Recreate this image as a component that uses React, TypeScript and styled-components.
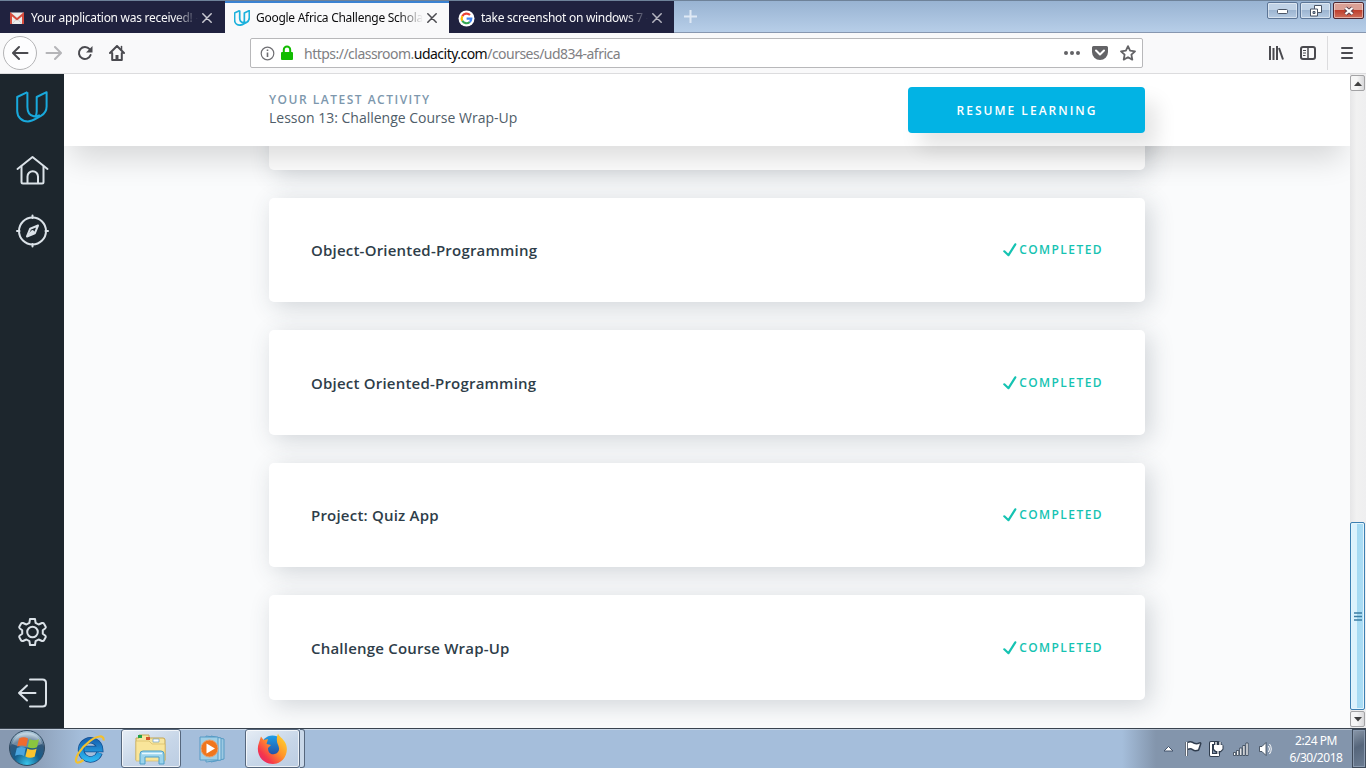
import React from "react";
import styled, { createGlobalStyle, css } from "styled-components";

const GlobalStyle = createGlobalStyle`
  * { box-sizing: border-box; }
  html, body { margin: 0; padding: 0; overflow: hidden; }
  body { font-family: "Open Sans", "Noto Sans", sans-serif; }
  svg { display: block; flex: none; }
`;

const Screen = styled.div`
  width: 1366px;
  height: 768px;
  display: flex;
  flex-direction: column;
  overflow: hidden;
  background: #fafbfc;
`;

/* ---------- tab strip ---------- */
const TabStrip = styled.div`
  height: 33px;
  flex: none;
  display: flex;
  align-items: stretch;
  background: linear-gradient(#98b3d2, #b7cee8);
  border-top: 1px solid #6e8299;
  border-bottom: 1px solid #8797b0;
`;

const Tab = styled.div<{ $active?: boolean; $width: number; $end?: number }>`
  width: ${(p) => p.$width}px;
  height: 32px;
  flex: none;
  display: flex;
  align-items: center;
  padding: 2px ${(p) => p.$end ?? 12}px 0 9px;
  color: ${(p) => (p.$active ? "#0c0c0d" : "#f9f9fa")};
  background: ${(p) => (p.$active ? "#f9f9fa" : "#20223f")};
  ${(p) =>
    p.$active &&
    css`
      box-shadow: inset 0 2px 0 #3a82d2;
    `}
`;

const TabTitle = styled.span<{ $spacing: number }>`
  flex: 1;
  min-width: 0;
  margin: 0 4px 0 6px;
  overflow: hidden;
  white-space: pre;
  font: 12px/18px "Noto Sans", sans-serif;
  letter-spacing: ${(p) => p.$spacing}px;
  mask-image: linear-gradient(to right, #000 calc(100% - 24px), transparent);
`;

const StripSpace = styled.div`
  flex: 1;
  padding: 8px 0 0 9px;
`;

const WindowButtons = styled.div`
  display: flex;
  gap: 2px;
  padding: 1px 2px 0 0;
`;

const WindowButton = styled.div<{ $close?: boolean }>`
  width: 31px;
  height: 17px;
  display: flex;
  align-items: center;
  justify-content: center;
  border: 1px solid ${(p) => (p.$close ? "#4f2731" : "#5c7596")};
  border-radius: 2px;
  box-shadow: inset 0 0 0 1px rgba(255, 255, 255, 0.45);
  background: ${(p) =>
    p.$close
      ? "linear-gradient(#dba095 0 45%, #bf3f2d 50%, #cf6f5b)"
      : "linear-gradient(#c0d2e6 0 45%, #9db5d1 50%, #b5cae2)"};
`;

/* ---------- toolbar ---------- */
const Toolbar = styled.div`
  height: 41px;
  flex: none;
  display: flex;
  align-items: center;
  background: #f9f9fa;
  border-bottom: 1px solid #dcdcde;
`;

const NavButtons = styled.div`
  width: 250px;
  display: flex;
  align-items: center;
  padding-left: 3px;
`;

const BackButton = styled.div`
  width: 34px;
  height: 34px;
  margin-right: 8px;
  display: flex;
  align-items: center;
  justify-content: center;
  border: 1px solid #b4b4b6;
  border-radius: 50%;
  background: #fdfdfe;
`;

const NavIcon = styled.div`
  width: 16px;
  margin-right: 16px;
`;

const AddressBar = styled.div`
  width: 893px;
  height: 30px;
  display: flex;
  align-items: center;
  padding: 0 6px 0 9px;
  border: 1px solid #b8b8ba;
  border-radius: 2px;
  background: #fff;
`;

const LockSlot = styled.div`
  margin-left: 5px;
`;

const Url = styled.span`
  flex: 1;
  margin-left: 10px;
  padding-top: 2px;
  color: #808083;
  font: 14px/20px "Noto Sans", sans-serif;
  letter-spacing: -0.52px;
  b {
    font-weight: 400;
    color: #0c0c0d;
  }
`;

const AddressActions = styled.div`
  display: flex;
  align-items: center;
  gap: 12px;
`;

const ToolbarEnd = styled.div`
  flex: 1;
  height: 100%;
  display: flex;
  align-items: center;
  justify-content: flex-end;
`;

const MenuButton = styled.div`
  height: 34px;
  width: 39px;
  margin-left: 11px;
  padding-left: 11px;
  display: flex;
  align-items: center;
  border-left: 1px solid #dcdcde;
`;

/* ---------- page ---------- */
const Viewport = styled.div`
  height: 654px;
  flex: none;
  display: flex;
`;

const Sidebar = styled.nav`
  width: 64px;
  flex: none;
  display: flex;
  flex-direction: column;
  align-items: center;
  padding: 17px 0 18px;
  background: #1d262d;
`;

const SidebarGap = styled.div<{ $size?: number }>`
  ${(p) => (p.$size ? `height: ${p.$size}px;` : "flex: 1;")}
`;

const Page = styled.main`
  width: 1286px;
  flex: none;
  display: flex;
  flex-direction: column;
  overflow: hidden;
  background: #fafbfc;
`;

const ActivityHeader = styled.header`
  height: 72px;
  flex: none;
  display: flex;
  align-items: flex-start;
  justify-content: space-between;
  padding: 13px 205px 0;
  background: #fff;
  box-shadow: 0 20px 30px -7px rgba(0, 0, 0, 0.14);
  z-index: 1;
`;

const ActivityLabel = styled.div`
  margin-top: 4px;
  font-size: 12px;
  font-weight: 600;
  line-height: 18px;
  letter-spacing: 1.5px;
  color: #7d97ad;
`;

const ActivityName = styled.div`
  margin-top: -1px;
  font-size: 14px;
  line-height: 20px;
  letter-spacing: 0;
  color: #4f5d69;
`;

const ResumeButton = styled.div`
  width: 237px;
  height: 46px;
  display: flex;
  align-items: center;
  justify-content: center;
  border-radius: 4px;
  background: #02b3e4;
  box-shadow: 12px 15px 20px 0 rgba(0, 0, 0, 0.1);
  color: #fff;
  font-size: 12px;
  font-weight: 600;
  letter-spacing: 2.02px;
  padding: 1px 0 0 1px;
`;

const LessonList = styled.div`
  display: flex;
  flex-direction: column;
  gap: 28px;
  width: 876px;
  margin: -80.75px 0 0 205px;
`;

const LessonCard = styled.div`
  height: 104.5px;
  flex: none;
  display: flex;
  align-items: center;
  justify-content: space-between;
  padding: 0 42px;
  border-radius: 5px;
  background: #fff;
  box-shadow: 5px 5px 25px 0 rgba(46, 61, 73, 0.2);
`;

const LessonTitle = styled.span`
  font-size: 15px;
  font-weight: 600;
  line-height: 22px;
  letter-spacing: 0.21px;
  color: #2e3d49;
`;

const Status = styled.span`
  display: flex;
  align-items: center;
  gap: 2px;
  color: #15c3b2;
  font-size: 12px;
  font-weight: 600;
  line-height: 20px;
  letter-spacing: 1.43px;
`;

const Scrollbar = styled.div`
  width: 16px;
  display: flex;
  flex-direction: column;
  align-items: flex-start;
  padding: 1px 0 1px;
  background: linear-gradient(90deg, #e6e6e7, #f1f1f1 40%, #efeff0);
`;

const ScrollArrow = styled.div`
  width: 15px;
  height: 16px;
  display: flex;
  align-items: center;
  justify-content: center;
  border: 1px solid #a3a3a5;
  border-radius: 2px;
  background: linear-gradient(90deg, #f6f6f6 45%, #d8d8da);
`;

const ScrollThumb = styled.div`
  width: 15px;
  height: 188px;
  margin-top: auto;
  margin-bottom: 1px;
  display: flex;
  align-items: center;
  justify-content: center;
  border: 1px solid #3c7fb1;
  border-radius: 2px;
  box-shadow: inset 0 0 0 1px #e3f5fd;
  background: linear-gradient(90deg, #dcf2fc 45%, #a6daf2 50%, #abddf5);
`;

/* ---------- taskbar ---------- */
const Taskbar = styled.footer`
  height: 40px;
  flex: none;
  display: flex;
  border-top: 1px solid #39434f;
  box-shadow: inset 0 1px 0 rgba(255, 255, 255, 0.4);
  background: linear-gradient(
    90deg,
    #8799b1 0,
    #8799b1 24px,
    #a5bedb 82px,
    #a5bedb 1122px,
    #8395ac 1156px
  );
`;

const StartCell = styled.div`
  width: 60px;
  padding: 0 0 0 8px;
`;

const TaskItem = styled.div<{ $width?: number; $running?: boolean }>`
  width: ${(p) => p.$width ?? 60}px;
  height: 39px;
  flex: none;
  display: flex;
  align-items: center;
  justify-content: center;
  ${(p) =>
    p.$running &&
    css`
      border: 1px solid #56677d;
      border-radius: 3px;
      box-shadow: inset 0 0 0 1px rgba(255, 255, 255, 0.7);
      background: linear-gradient(150deg, #e6edf5, #c7d6e8 55%, #bccde2);
    `}
`;

const StackedEdge = styled.div`
  width: 5px;
  height: 39px;
  border: 1px solid #56677d;
  border-left: 0;
  border-radius: 0 3px 3px 0;
  background: #c9d8e9;
`;

const Tray = styled.div`
  margin-left: auto;
  display: flex;
  align-items: center;
`;

const Clock = styled.div`
  width: 72px;
  text-align: center;
  color: #fff;
  font: 12px/17px "Noto Sans", sans-serif;
  letter-spacing: -0.45px;
`;

const ShowDesktop = styled.div`
  width: 14px;
  height: 39px;
  border: 1px solid #3f4b5b;
  box-shadow: inset 0 0 0 1px #8b9bb0;
  background: linear-gradient(155deg, #8b98a9, #56667b 45%, #6b7c92);
`;

/* ---------- icons ---------- */
const CloseIcon = ({ color }: { color: string }) => (
  <svg width="10" height="10" viewBox="0 0 10 10" stroke={color} strokeWidth="1.5" strokeLinecap="round">
    <path d="M.8.8 9.2 9.2M9.2.8.8 9.2" />
  </svg>
);

const GmailIcon = () => (
  <svg width="16" height="16" viewBox="0 0 16 16">
    <rect x="1" y="2.5" width="14" height="11.5" rx="1" fill="#ececec" />
    <path d="M3.5 13.5 8 8.5l4.5 5" fill="none" stroke="#cfcfcf" />
    <path d="M2 14V4.2l6 5 6-5V14" fill="none" stroke="#d54b3d" strokeWidth="2" />
  </svg>
);

const GoogleIcon = () => (
  <svg width="17" height="17" viewBox="0 0 17 17">
    <circle cx="8.5" cy="8.5" r="8" fill="#fff" />
    <g fill="none" strokeWidth="2.2">
      <path d="M12 5.1A4.8 4.8 0 0 0 4.3 6.2" stroke="#ea4335" />
      <path d="M4.3 6.2a4.8 4.8 0 0 0 0 4.6" stroke="#fbbc05" />
      <path d="M4.3 10.8A4.8 4.8 0 0 0 11.7 12" stroke="#34a853" />
      <path d="M11.7 12a4.6 4.6 0 0 0 1.6-3.4H8.6" stroke="#4285f4" />
    </g>
  </svg>
);

const UdacityMark = ({ size, stroke, color }: { size: number; stroke: number; color: string }) => (
  <svg width={size} height={size} viewBox="0 0 32 32" fill="none" stroke={color} strokeWidth={stroke} strokeLinejoin="round">
    <path d="M11.4 1.2V16c0 5 2 8.400 6.300 9.200 2.500.5 4.500-.1 6.200-1.100" />
    <path d="M11.400 1.200 1.200 6v14c0 6 4.500 10.400 10.700 10.400 3 0 5.300-1 9-3.200l4-2.300c3.700-2.200 5.700-5 5.700-9.500V1.200L20.700 6v14.400c0 2.500-.2 3.600-1.500 5.600" />
  </svg>
);

const ArrowIcon = ({ color, flip }: { color: string; flip?: boolean }) => (
  <svg width="17" height="16" viewBox="0 0 17 16" fill="none" stroke={color} strokeWidth="2" strokeLinecap="round" strokeLinejoin="round">
    <path d={flip ? "M1.500 8h14M10 2l6 6-6 6" : "M15.500 8h-14M7 2 1 8l6 6"} />
  </svg>
);

const ReloadIcon = () => (
  <svg width="16" height="16" viewBox="0 0 16 16">
    <path d="M12.600 4.200A6 6 0 1 0 13.600 10" fill="none" stroke="#4a4a4f" strokeWidth="2" strokeLinecap="round" />
    <path d="M15.500 1v6.500H9Z" fill="#4a4a4f" />
  </svg>
);

const BrowserHomeIcon = () => (
  <svg width="16" height="16" viewBox="0 0 16 16" fill="none" stroke="#4a4a4f" strokeWidth="2" strokeLinecap="round" strokeLinejoin="round">
    <path d="m1 8 7-7 7 7M3.200 8v7h9.600V8" />
    <path d="M8 10v4" strokeWidth="3" strokeLinecap="butt" />
    <path d="M12.500 1.500v3" strokeWidth="1.500" />
  </svg>
);

const InfoIcon = () => (
  <svg width="15" height="15" viewBox="0 0 15 15" fill="none" stroke="#6f6f73">
    <circle cx="7.500" cy="7.500" r="6.300" strokeWidth="1.200" />
    <path d="M7.500 6.500V11M7.500 3.500v1.600" strokeWidth="1.600" />
  </svg>
);

const LockIcon = () => (
  <svg width="14" height="16" viewBox="0 0 14 16">
    <path d="M3.800 8V4.800a3.200 3.200 0 0 1 6.400 0V8" fill="none" stroke="#12bc00" strokeWidth="2" />
    <rect x="1" y="7" width="12" height="8" rx="1" fill="#12bc00" />
  </svg>
);

const DotsIcon = () => (
  <svg width="16" height="16" viewBox="0 0 16 16" fill="#636366">
    <circle cx="2" cy="8" r="2" />
    <circle cx="8" cy="8" r="2" />
    <circle cx="14" cy="8" r="2" />
  </svg>
);

const PocketIcon = () => (
  <svg width="16" height="16" viewBox="0 0 16 16">
    <path d="M1.500 1h13A1.500 1.500 0 0 1 16 2.500V7A8 8 0 0 1 0 7V2.500A1.500 1.500 0 0 1 1.500 1Z" fill="#636366" />
    <path d="m4 5.500 4 4 4-4" fill="none" stroke="#fff" strokeWidth="2" strokeLinecap="round" strokeLinejoin="round" />
  </svg>
);

const StarIcon = () => (
  <svg width="16" height="16" viewBox="0 0 16 16" fill="none" stroke="#636366" strokeWidth="1.800" strokeLinejoin="round">
    <path d="m8 1.100 2.100 4.500 4.900.7-3.600 3.400.9 4.900L8 12.200l-4.300 2.400.9-4.900L1 6.300l4.900-.7Z" />
  </svg>
);

const LibraryIcon = () => (
  <svg width="16" height="16" viewBox="0 0 16 16" fill="none" stroke="#4a4a4f" strokeWidth="2" strokeLinecap="butt">
    <path d="M2 1v14M5.500 3v12M9 1v14M11 3l4 11.500" />
  </svg>
);

const SidebarIcon = () => (
  <svg width="16" height="16" viewBox="0 0 16 16" fill="none" stroke="#4a4a4f">
    <rect x="1" y="2" width="14" height="12" rx="2" strokeWidth="2" />
    <path d="M8 2v12" strokeWidth="1.500" />
    <path d="M3 5.500h3M3 8h3M3 10.500h2.500" />
  </svg>
);

const MenuIcon = () => (
  <svg width="16" height="16" viewBox="0 0 16 16" stroke="#4a4a4f" strokeWidth="2" strokeLinecap="round">
    <path d="M3 3h10M3 8h10M3 13h10" />
  </svg>
);

const iconProps = {
  width: 34,
  height: 34,
  viewBox: "0 0 34 34",
  fill: "none",
  stroke: "#dbe2e8",
  strokeWidth: 2,
  strokeLinejoin: "round" as const,
  strokeLinecap: "round" as const,
};

const HomeIcon = () => (
  <svg {...iconProps} viewBox="0 .5 34 34">
    <path d="m2.500 16.500 15-12 15 12" />
    <path d="M6.500 14v15.500q0 1.500 1.500 1.500h19q1.500 0 1.500-1.500V14M12.500 31v-7a5 5 0 0 1 10.500 0v7" />
  </svg>
);

const CompassIcon = () => (
  <svg {...iconProps} viewBox="-.5 0 34 34">
    <circle cx="17" cy="17" r="13.500" />
    <path d="M17 1.500v2.500M17 30v2.500M1.500 17h2.500M30 17h2.500" />
    <path d="m22.500 11.500-7.800 3.200-3.200 7.800 7.800-3.200Z" />
    <path d="m17 17-4 4 5.500-2.500Z" fill="#dbe2e8" />
  </svg>
);

const GearIcon = () => (
  <svg {...iconProps} viewBox="-.5 0 34 34">
    <circle cx="17" cy="17" r="5.300" />
    <path d="M14.500 4h5l.6 3.800 3 1.700 3.400-1.500q1.500-.3 2 .7l1.700 3q.4 1-.6 1.800l-2.300 1.700v3.600l2.300 1.700q1 .8.6 1.800l-1.700 3q-.5 1-2 .7l-3.400-1.500-3 1.700-.6 3.800h-5l-.6-3.800-3-1.700-3.400 1.500q-1.500.3-2-.7l-1.700-3q-.4-1 .6-1.800l2.300-1.700v-3.600l-2.300-1.700q-1-.8-.6-1.800l1.700-3q.5-1 2-.7l3.400 1.500 3-1.700Z" />
  </svg>
);

const ExitIcon = () => (
  <svg {...iconProps}>
    <path d="M15 3.500h12.500Q31 3.500 31 7v20q0 3.500-3.500 3.500H15M20.500 17H4M12 9.500 4 17l8 7.500" />
  </svg>
);

const CheckIcon = () => (
  <svg width="14" height="14" viewBox="0 0 14 14" fill="none" stroke="#15c3b2" strokeWidth="2.200" strokeLinecap="round" strokeLinejoin="round">
    <path d="m1.300 8.300 4.200 3.900L12.300 1.300" />
  </svg>
);

const StartOrb = () => (
  <svg width="38" height="38" viewBox="0 0 38 38">
    <defs>
      <radialGradient id="orb" cx="50%" cy="95%" r="85%">
        <stop offset="0" stopColor="#38c4ea" />
        <stop offset=".45" stopColor="#155d8c" />
        <stop offset=".8" stopColor="#34587a" />
        <stop offset="1" stopColor="#a4c0d3" />
      </radialGradient>
    </defs>
    <circle cx="19" cy="19" r="17.500" fill="url(#orb)" stroke="#304960" />
    <path d="M4 15a15.500 15.500 0 0 1 30 0q-15 7-30 0Z" fill="#fff" opacity=".3" />
    <path d="M11 9.500q4.500-2.400 9 0l-1.800 8q-4-2.200-9 0Z" fill="#ef6b2e" />
    <path d="M21.500 10q4.500 2.500 9.500.3l-2 8q-4.500 2.200-9.300-.2Z" fill="#8ac63f" />
    <path d="M8.800 19q4.800-2.200 9 0l-1.800 8q-4-2.400-9-.2Z" fill="#4aa5df" />
    <path d="M19.300 19.600q4.500 2.400 9.300.2l-2 8q-4.500 2.200-9.200-.2Z" fill="#fcc42e" />
  </svg>
);

const ExplorerIcon = () => (
  <svg width="34" height="34" viewBox="1.500 1 34 34" fill="none">
    <defs>
      <linearGradient id="ie" x1="0" y1="0" x2="0" y2="1">
        <stop offset="0" stopColor="#1766b5" />
        <stop offset="1" stopColor="#2cb4ef" />
      </linearGradient>
    </defs>
    <path d="M27 22A9.500 9.500 0 1 1 27.500 18H12" stroke="#124e91" strokeWidth="6.500" />
    <path d="M27 22A9.500 9.500 0 1 1 27.500 18H12" stroke="url(#ie)" strokeWidth="5" />
    <path d="M31 9.500c.8-6-6.500-5-14 .8C7.500 17.500 1.500 28 4 31c1.200 1.200 4 .2 7-2" stroke="#f2c02f" strokeWidth="2.200" />
  </svg>
);

const FolderIcon = () => (
  <svg width="34" height="32" viewBox="0 0 34 32">
    <path d="M2 5h3V2h10v3h14q2 0 2 2v20H2Z" fill="#f7e6a0" stroke="#c5a653" />
    <path d="M4 2h4v3H4Z" fill="#22a34a" />
    <path d="M12 4h4v3h-4Z" fill="#d4532b" />
    <path d="M19 6h6v3h-6Z" fill="#fff" stroke="#5796c7" strokeWidth=".6" />
    <path d="M2 8h13l3 3h13v17H2Z" fill="#f9e59a" stroke="#d5b965" strokeWidth=".7" />
    <path d="M6 31V21q0-3 3-3h18q3 0 3 3v10h-5v-7H11v7Z" fill="#9bd4ec" stroke="#4c9fc9" />
    <path d="M8 20.500h20" stroke="#e8f8ff" strokeWidth="1.500" />
  </svg>
);

const MediaIcon = () => (
  <svg width="30" height="28" viewBox="0 0 30 28">
    <path d="m13 1 13 3v20l-13 3Z" fill="#9cc9e2" stroke="#569bc5" />
    <path d="m8 1 15 2v22L8 27Z" fill="#b8dced" stroke="#569bc5" />
    <path d="M2 2h18v23H2Z" fill="#9fcfe6" stroke="#569bc5" />
    <circle cx="11.500" cy="13.500" r="8.500" fill="#f0761c" stroke="#e2a173" />
    <path d="m8.500 8.500 8.500 5-8.500 5Z" fill="#fff" />
  </svg>
);

const FirefoxIcon = () => (
  <svg width="32" height="32" viewBox="0 0 32 32">
    <defs>
      <linearGradient id="fox" x1="1" y1="0" x2="0" y2="1">
        <stop offset="0" stopColor="#ffe32f" />
        <stop offset=".45" stopColor="#ff922a" />
        <stop offset=".75" stopColor="#f5364c" />
        <stop offset="1" stopColor="#d91d83" />
      </linearGradient>
      <linearGradient id="globe" x1="0" y1="0" x2="0" y2="1">
        <stop offset="0" stopColor="#1e9fe8" />
        <stop offset="1" stopColor="#254299" />
      </linearGradient>
    </defs>
    <circle cx="15.500" cy="14" r="11.500" fill="url(#globe)" />
    <path d="M21 .5c1 3 4 4 6.500 8C33.500 17 27.500 31 16 31S-2 20 2 9.500L4 3.500l2.500 3.500 4.500-1-1.500 5 4.500 1-3 3c0 5 3 7 6.500 6 3-.7 5-3 4.500-6-.5-3.500-4-6-1-14.500Z" fill="url(#fox)" />
  </svg>
);

const TrayIcons = () => (
  <svg width="120" height="24" viewBox="0 0 120 24" strokeLinejoin="round">
    <path d="m4 14 4.500-4.500L13 14Z" fill="#fff" stroke="#42536b" />
    <g stroke="#303d4e" strokeWidth="3">
      <path d="M26.500 5v14" />
      <path d="M28 6q3-1.500 6 1 3 1 6-.5l-2 6q-3 1-5-.5-2-1.500-5-.5Z" />
      <path d="M51 6h7v12h-7Z" fill="none" strokeWidth="4" />
      <path d="M54 9h8v3l-2 2h-4l-2-2ZM56 8V5M60 8V5M58 14v3" />
    </g>
    <path d="M26.500 5v14" stroke="#fff" strokeWidth="1.500" />
    <path d="M28 6q3-1.500 6 1 3 1 6-.5l-2 6q-3 1-5-.5-2-1.500-5-.5Z" fill="#fff" />
    <path d="M54 6h-3v12h8" fill="none" stroke="#fff" strokeWidth="2" />
    <path d="M54 8h8.500v4l-2 2H56l-2-2Z" fill="#fff" />
    <path d="M56 8V5M60 8V5M58 14v3" stroke="#fff" strokeWidth="1.300" />
    <g fill="#fff" stroke="#303d4e" strokeWidth=".8">
      <path d="M73.500 15.500h2.200v3h-2.200ZM76.600 13.500h2.200v5h-2.200ZM79.700 11h2.200v7.500h-2.200ZM82.800 8.500H85v10h-2.200ZM85.900 6h2.200v12.500h-2.200Z" />
      <path d="M99.500 9.500h2.500l4-4v13l-4-4h-2.500Z" />
    </g>
    <path d="M108.500 9q2 3 0 6M109.500 7q3.500 5 0 10" fill="none" stroke="#fff" />
  </svg>
);

const lessons = [
  "Object-Oriented-Programming",
  "Object Oriented-Programming",
  "Project: Quiz App",
  "Challenge Course Wrap-Up",
];

export default function App() {
  return (
    <Screen>
      <GlobalStyle />
      <TabStrip>
        <Tab $width={225} $end={13}>
          <GmailIcon />
          <TabTitle $spacing={-0.28}>Your application was received! - </TabTitle>
          <CloseIcon color="#c9c9d2" />
        </Tab>
        <Tab $width={224} $active>
          <UdacityMark size={16} stroke={3.4} color="#1bb1dc" />
          <TabTitle $spacing={-0.28}>Google Africa Challenge Scholarship</TabTitle>
          <CloseIcon color="#4a4a4f" />
        </Tab>
        <Tab $width={225}>
          <GoogleIcon />
          <TabTitle $spacing={-0.28}>take screenshot on windows 7 - </TabTitle>
          <CloseIcon color="#b5b5c0" />
        </Tab>
        <StripSpace>
          <svg width="15" height="15" viewBox="0 0 15 15" stroke="#dfe9f5" strokeWidth="2">
            <path d="M7.500 1v13M1 7.500h13" />
          </svg>
        </StripSpace>
        <WindowButtons>
          <WindowButton>
            <svg width="12" height="6" viewBox="0 0 12 6">
              <rect x=".5" y="1.500" width="10" height="4" rx="1" fill="#fff" stroke="#4a5566" />
            </svg>
          </WindowButton>
          <WindowButton>
            <svg width="12" height="12" viewBox="0 0 12 12" fill="#fff" stroke="#4a5566">
              <path d="M4.500.5h7v7h-7Z" />
              <path d="M.500 4h7v7h-7Z" />
              <path d="M3 6.500h2v2H3Z" fill="#9db5d1" />
            </svg>
          </WindowButton>
          <WindowButton $close>
            <svg width="12" height="10" viewBox="0 0 12 10" fill="none">
              <path d="m2.500 2 7 6M9.500 2l-7 6" stroke="#5a3f4a" strokeWidth="4" />
              <path d="m2.500 2 7 6M9.500 2l-7 6" stroke="#fff" strokeWidth="2.300" />
            </svg>
          </WindowButton>
        </WindowButtons>
      </TabStrip>

      <Toolbar>
        <NavButtons>
          <BackButton>
            <ArrowIcon color="#4a4a4f" />
          </BackButton>
          <NavIcon>
            <ArrowIcon color="#b5b5b8" flip />
          </NavIcon>
          <NavIcon>
            <ReloadIcon />
          </NavIcon>
          <NavIcon>
            <BrowserHomeIcon />
          </NavIcon>
        </NavButtons>
        <AddressBar>
          <InfoIcon />
          <LockSlot>
            <LockIcon />
          </LockSlot>
          <Url>
            https://classroom.<b>udacity.com</b>/courses/ud834-africa
          </Url>
          <AddressActions>
            <DotsIcon />
            <PocketIcon />
            <StarIcon />
          </AddressActions>
        </AddressBar>
        <ToolbarEnd>
          <NavIcon>
            <LibraryIcon />
          </NavIcon>
          <SidebarIcon />
          <MenuButton>
            <MenuIcon />
          </MenuButton>
        </ToolbarEnd>
      </Toolbar>

      <Viewport>
        <Sidebar>
          <UdacityMark size={32} stroke={2} color="#19a9dc" />
          <SidebarGap $size={30} />
          <HomeIcon />
          <SidebarGap $size={27} />
          <CompassIcon />
          <SidebarGap />
          <GearIcon />
          <SidebarGap $size={27} />
          <ExitIcon />
        </Sidebar>
        <Page>
          <ActivityHeader>
            <div>
              <ActivityLabel>YOUR LATEST ACTIVITY</ActivityLabel>
              <ActivityName>Lesson 13: Challenge Course Wrap-Up</ActivityName>
            </div>
            <ResumeButton>RESUME LEARNING</ResumeButton>
          </ActivityHeader>
          <LessonList>
            <LessonCard />
            {lessons.map((title) => (
              <LessonCard key={title}>
                <LessonTitle>{title}</LessonTitle>
                <Status>
                  <CheckIcon />
                  COMPLETED
                </Status>
              </LessonCard>
            ))}
          </LessonList>
        </Page>
        <Scrollbar>
          <ScrollArrow>
            <svg width="8" height="5" viewBox="0 0 8 5" fill="#404040">
              <path d="M0 5 4 .5 8 5Z" />
            </svg>
          </ScrollArrow>
          <ScrollThumb>
            <svg width="8" height="9" viewBox="0 0 8 9" stroke="#3c7fa5" strokeWidth="1.500">
              <path d="M0 1h8M0 4.500h8M0 8h8" />
            </svg>
          </ScrollThumb>
          <ScrollArrow>
            <svg width="8" height="5" viewBox="0 0 8 5" fill="#404040">
              <path d="M0 0h8L4 4.500Z" />
            </svg>
          </ScrollArrow>
        </Scrollbar>
      </Viewport>

      <Taskbar>
        <StartCell>
          <StartOrb />
        </StartCell>
        <TaskItem $width={61}>
          <ExplorerIcon />
        </TaskItem>
        <TaskItem $running>
          <FolderIcon />
        </TaskItem>
        <TaskItem $width={64}>
          <MediaIcon />
        </TaskItem>
        <TaskItem $width={55} $running>
          <FirefoxIcon />
        </TaskItem>
        <StackedEdge />
        <Tray>
          <TrayIcons />
          <Clock>
            2:24 PM
            <br />
            6/30/2018
          </Clock>
          <ShowDesktop />
        </Tray>
      </Taskbar>
    </Screen>
  );
}
